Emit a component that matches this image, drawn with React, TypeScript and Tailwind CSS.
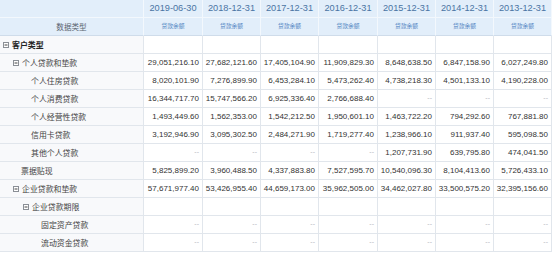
import React from "react";

type Row = {
  label: string;
  level: number;
  toggle?: boolean;
  bold?: boolean;
  values: (string | null)[] | null;
};

const dates = ["2019-06-30", "2018-12-31", "2017-12-31", "2016-12-31", "2015-12-31", "2014-12-31", "2013-12-31"];

const D = "--";
const rows: Row[] = [
  { label: "客户类型", level: 0, toggle: true, bold: true, values: null },
  { label: "个人贷款和垫款", level: 1, toggle: true, values: ["29,051,216.10", "27,682,121.60", "17,405,104.90", "11,909,829.30", "8,648,638.50", "6,847,158.90", "6,027,249.80"] },
  { label: "个人住房贷款", level: 2, values: ["8,020,101.90", "7,276,899.90", "6,453,284.10", "5,473,262.40", "4,738,218.30", "4,501,133.10", "4,190,228.00"] },
  { label: "个人消费贷款", level: 2, values: ["16,344,717.70", "15,747,566.20", "6,925,336.40", "2,766,688.40", D, D, D] },
  { label: "个人经营性贷款", level: 2, values: ["1,493,449.60", "1,562,353.00", "1,542,212.50", "1,950,601.10", "1,463,722.20", "794,292.60", "767,881.80"] },
  { label: "信用卡贷款", level: 2, values: ["3,192,946.90", "3,095,302.50", "2,484,271.90", "1,719,277.40", "1,238,966.10", "911,937.40", "595,098.50"] },
  { label: "其他个人贷款", level: 2, values: [D, D, D, D, "1,207,731.90", "639,795.80", "474,041.50"] },
  { label: "票据贴现", level: 1, values: ["5,825,899.20", "3,960,488.50", "4,337,883.80", "7,527,595.70", "10,540,096.30", "8,104,413.60", "5,726,433.10"] },
  { label: "企业贷款和垫款", level: 1, toggle: true, values: ["57,671,977.40", "53,426,955.40", "44,659,173.00", "35,962,505.00", "34,462,027.80", "33,500,575.20", "32,395,156.60"] },
  { label: "企业贷款期限", level: 2, toggle: true, values: null },
  { label: "固定资产贷款", level: 3, values: [D, D, D, D, D, D, D] },
  { label: "流动资金贷款", level: 3, values: [D, D, D, D, D, D, D] },
];

function Toggle() {
  return (
    <svg width="6" height="6" viewBox="0 0 6 6" className="shrink-0">
      <rect x="0.5" y="0.5" width="5" height="5" fill="#ffffff" stroke="#8a8f96" strokeWidth="1" />
      <line x1="1.5" y1="3" x2="4.5" y2="3" stroke="#444" strokeWidth="1" />
    </svg>
  );
}

const indentClass = ["pl-[3px]", "pl-[13px]", "pl-[23px]", "pl-[33px]"];
const leafIndent = ["pl-[12px]", "pl-[21px]", "pl-[31px]", "pl-[41px]"];

export default function App() {
  return (
    <div className="w-[553px] h-[253px] bg-white overflow-hidden">
      <div className="grid grid-cols-[144px_59px_58px_58px_59px_58px_58px_58px] w-[552px]">
        {/* header row 1 */}
        <div className="h-[18px] bg-[#e2eefa] border-r border-b border-r-[#f3f8fd] border-b-[#f3f8fd]" />
        {dates.map((d) => (
          <div
            key={d}
            className="h-[18px] bg-[#e2eefa] border-r border-b border-r-[#f3f8fd] border-b-[#f3f8fd] flex items-center justify-center text-[9.2px] text-[#4a74a3] font-['Liberation_Sans',Arial,sans-serif]"
          >
            {d}
          </div>
        ))}
        {/* header row 2 */}
        <div className="h-[18px] bg-[#e2eefa] border-r border-b border-r-[#f3f8fd] border-b-[#cfdcea] flex items-center justify-center text-[7.6px] text-[#5b6470] font-['Noto_Sans_CJK_SC','Noto_Sans',sans-serif]">
          数据类型
        </div>
        {dates.map((d) => (
          <div
            key={d + "b"}
            className="h-[18px] bg-[#e2eefa] border-r border-b border-r-[#f3f8fd] border-b-[#cfdcea] flex items-center justify-center text-[5.8px] text-[#4b7fc0] font-['Noto_Sans_CJK_SC','Noto_Sans',sans-serif]"
          >
            贷款余额
          </div>
        ))}
        {/* body */}
        {rows.map((r) => (
          <React.Fragment key={r.label}>
            <div
              className={`h-[18px] bg-[#f8f9fb] border-r border-b border-[#e1e6ec] flex items-center gap-[3px] text-[7.9px] font-['Noto_Sans_CJK_SC','Noto_Sans',sans-serif] ${r.toggle ? indentClass[r.level] : leafIndent[r.level]} ${r.bold ? "font-bold text-[#222]" : "text-[#444]"}`}
            >
              {r.toggle && <Toggle />}
              <span>{r.label}</span>
            </div>
            {Array.from({ length: 7 }).map((_, i) => {
              const v = r.values ? r.values[i] : null;
              return (
                <div
                  key={i}
                  className={`h-[18px] bg-white border-r border-b border-[#e1e6ec] flex items-center justify-end pr-[3px] font-['Liberation_Sans',Arial,sans-serif] ${v === D ? "text-[7px] text-[#b5b9bf]" : "text-[8px] text-[#333]"}`}
                >
                  {v}
                </div>
              );
            })}
          </React.Fragment>
        ))}
      </div>
    </div>
  );
}
